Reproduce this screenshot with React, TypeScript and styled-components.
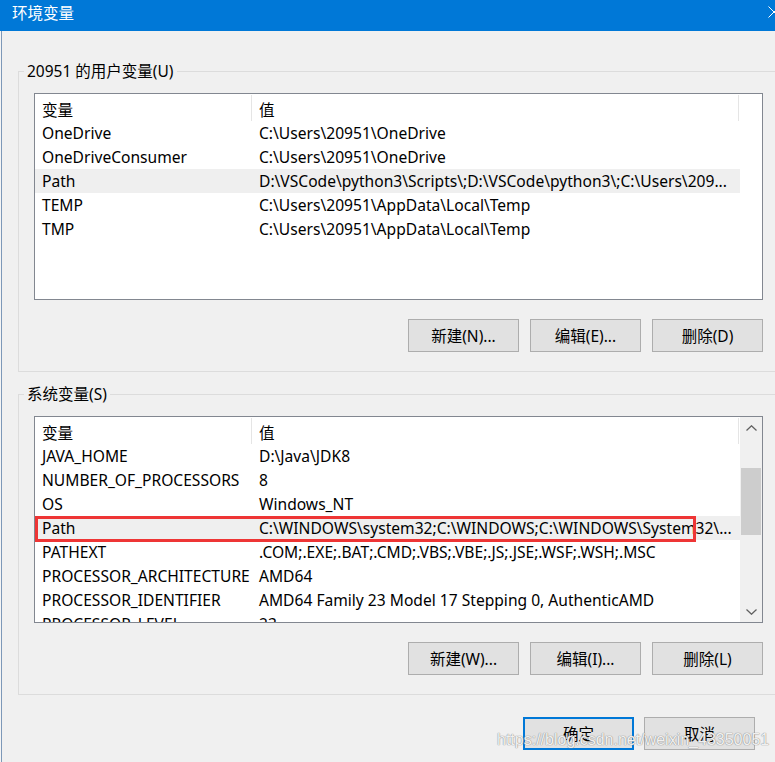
import styled, { createGlobalStyle } from "styled-components";

const GlobalStyle = createGlobalStyle`
    html, body {
        margin: 0;
        padding: 0;
        background: #f0f0f0;
    }
    * {
        box-sizing: border-box;
    }
`;

const FONT = `"Noto Sans", "Noto Sans CJK SC", sans-serif`;

type Row = [string, string];

const userRows: Row[] = [
    ["OneDrive", "C:\\Users\\20951\\OneDrive"],
    ["OneDriveConsumer", "C:\\Users\\20951\\OneDrive"],
    ["Path", "D:\\VSCode\\python3\\Scripts\\;D:\\VSCode\\python3\\;C:\\Users\\209..."],
    ["TEMP", "C:\\Users\\20951\\AppData\\Local\\Temp"],
    ["TMP", "C:\\Users\\20951\\AppData\\Local\\Temp"],
];

const systemRows: Row[] = [
    ["JAVA_HOME", "D:\\Java\\JDK8"],
    ["NUMBER_OF_PROCESSORS", "8"],
    ["OS", "Windows_NT"],
    ["Path", "C:\\WINDOWS\\system32;C:\\WINDOWS;C:\\WINDOWS\\System32\\..."],
    ["PATHEXT", ".COM;.EXE;.BAT;.CMD;.VBS;.VBE;.JS;.JSE;.WSF;.WSH;.MSC"],
    ["PROCESSOR_ARCHITECTURE", "AMD64"],
    ["PROCESSOR_IDENTIFIER", "AMD64 Family 23 Model 17 Stepping 0, AuthenticAMD"],
    ["PROCESSOR_LEVEL", "23"],
];

function VarList({ rows, selected, marked, scroll }: { rows: Row[]; selected: string; marked?: boolean; scroll?: boolean }) {
    return (
        <ListView>
            <ListContent>
                <HeaderRow>
                    <HeaderCell>变量</HeaderCell>
                    <HeaderCell>值</HeaderCell>
                </HeaderRow>
                {rows.map(([name, value]) => (
                    <ListRow key={name} $selected={name === selected}>
                        <Cell>{name}</Cell>
                        <Cell>{value}</Cell>
                        {marked && name === selected && <RedMark />}
                    </ListRow>
                ))}
            </ListContent>
            {scroll && (
                <ScrollBar>
                    <ArrowButton>
                        <svg width="11" height="6" viewBox="0 0 11 6">
                            <path d="M0.5 5.5 L5.5 0.8 L10.5 5.5" fill="none" stroke="#606060" strokeWidth="1.3" />
                        </svg>
                    </ArrowButton>
                    <Track>
                        <Thumb />
                    </Track>
                    <ArrowButton>
                        <svg width="11" height="6" viewBox="0 0 11 6">
                            <path d="M0.5 0.5 L5.5 5.2 L10.5 0.5" fill="none" stroke="#606060" strokeWidth="1.3" />
                        </svg>
                    </ArrowButton>
                </ScrollBar>
            )}
        </ListView>
    );
}

export default function App() {
    return (
        <Window>
            <GlobalStyle />
            <TitleBar>
                <Title>环境变量</Title>
                <CloseIcon width="12" height="12" viewBox="0 0 12 12">
                    <path d="M0.5 0.5 L11.5 11.5 M11.5 0.5 L0.5 11.5" stroke="#fff" strokeWidth="1" />
                </CloseIcon>
            </TitleBar>

            <Body>
                <Group $top={30}>
                    <Legend>20951 的用户变量(U)</Legend>
                    <VarList rows={userRows} selected="Path" />
                    <ButtonRow>
                        <Button>新建(N)...</Button>
                        <Button>编辑(E)...</Button>
                        <Button>删除(D)</Button>
                    </ButtonRow>
                </Group>

                <Group $top={12}>
                    <Legend>系统变量(S)</Legend>
                    <VarList rows={systemRows} selected="Path" marked scroll />
                    <ButtonRow>
                        <Button>新建(W)...</Button>
                        <Button>编辑(I)...</Button>
                        <Button>删除(L)</Button>
                    </ButtonRow>
                </Group>

                <Footer>
                    <Button $primary>确定</Button>
                    <Button>取消</Button>
                </Footer>
            </Body>

            <Watermark>https://blog.csdn.net/weixin_43350051</Watermark>
        </Window>
    );
}

const Window = styled.div`
    position: relative;
    width: 775px;
    height: 762px;
    overflow: hidden;
    background: #f0f0f0;
    font-family: ${FONT};
    font-size: 15.6px;
    color: #000;
    display: flex;
    flex-direction: column;
`;

const TitleBar = styled.div`
    height: 31px;
    flex-shrink: 0;
    background: #0078d7;
    color: #fff;
    display: flex;
    align-items: flex-start;
    justify-content: space-between;
    padding: 3px 0 0 12px;
`;

const Title = styled.div`
    font-size: 15.5px;
    line-height: 20px;
`;

const CloseIcon = styled.svg`
    margin-top: 3px;
    margin-right: -5px;
`;

const Body = styled.div`
    flex: 1;
    display: flex;
    flex-direction: column;
    padding-left: 18px;
    box-shadow: inset 1px 0 #f5f5f5, inset 2px 0 #7d98b8;
`;

const Group = styled.fieldset<{ $top: number }>`
    margin: ${(p) => p.$top}px 0 0 0;
    width: 770px;
    min-width: 0;
    padding: 0 0 19px 15px;
    border: 1px solid #dcdcdc;
`;

const Legend = styled.legend`
    margin-left: -10px;
    padding: 0 3px;
    font-size: 15.5px;
    line-height: 20px;
`;

const ListView = styled.div`
    margin-top: 12px;
    width: 729px;
    height: 207px;
    border: 1px solid #828790;
    background: #fff;
    display: flex;
    overflow: hidden;
`;

const ListContent = styled.div`
    flex: 1;
    overflow: hidden;
`;

const HeaderRow = styled.div`
    display: grid;
    grid-template-columns: 217px 487px;
    height: 27px;
    padding-top: 1px;
`;

const HeaderCell = styled.div`
    display: flex;
    align-items: center;
    padding: 2px 0 0 7px;
    border-right: 1px solid #e5e5e5;
`;

const ListRow = styled.div<{ $selected?: boolean }>`
    position: relative;
    display: grid;
    grid-template-columns: 217px 488px;
    width: 705px;
    height: 24px;
    background: ${(p) => (p.$selected ? "#efefef" : "transparent")};
`;

const Cell = styled.div`
    padding: 1px 0 0 7px;
    line-height: 23px;
    white-space: nowrap;
    overflow: hidden;
`;

/* 截图里的红框标注 */
const RedMark = styled.div`
    position: absolute;
    left: 0;
    top: 0;
    width: 661px;
    height: 26px;
    border: 3px solid #ee3535;
`;

const ScrollBar = styled.div`
    width: 22px;
    background: #f0f0f0;
    display: flex;
    flex-direction: column;
`;

const ArrowButton = styled.div`
    height: 21px;
    display: flex;
    align-items: center;
    justify-content: center;
`;

const Track = styled.div`
    flex: 1;
    padding: 30px 1px 0 1px;
`;

const Thumb = styled.div`
    height: 67px;
    background: #cdcdcd;
`;

const ButtonRow = styled.div`
    width: 729px;
    margin-top: 19px;
    display: flex;
    justify-content: flex-end;
    gap: 11px;
`;

const Button = styled.button<{ $primary?: boolean }>`
    width: 111px;
    height: 33px;
    padding: 0;
    font-family: ${FONT};
    font-size: 15.5px;
    color: #000;
    background: #e1e1e1;
    border: ${(p) => (p.$primary ? "2px solid #0078d7" : "1px solid #adadad")};
`;

const Footer = styled.div`
    margin-top: 22px;
    padding-right: 20px;
    display: flex;
    justify-content: flex-end;
    gap: 10px;
`;

const Watermark = styled.div`
    position: absolute;
    left: 497px;
    top: 731px;
    font-family: "Liberation Sans", Arial, sans-serif;
    font-size: 16px;
    color: rgba(255, 255, 255, 0.9);
    text-shadow: 0 0 1px #8a8a8a, 0 0 1px #8a8a8a;
    pointer-events: none;
`;
